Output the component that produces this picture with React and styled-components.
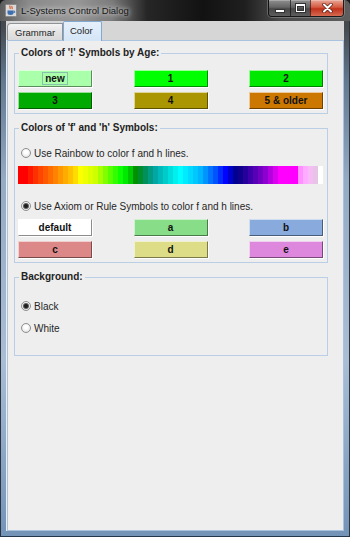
import React from "react";
import styled, { createGlobalStyle } from "styled-components";

const GlobalStyle = createGlobalStyle`
  html, body {
    margin: 0;
    padding: 0;
    background: #1b1b1b;
  }
  body {
    font-family: "Liberation Sans", Arial, sans-serif;
  }
`;

const Window = styled.div`
  width: 350px;
  height: 537px;
  box-sizing: border-box;
  display: flex;
  flex-direction: column;
  border-radius: 6px 6px 0 0;
  overflow: hidden;
  background: linear-gradient(
    180deg,
    #3e3e3e 0,
    #474c52 30px,
    #61788f 80px,
    #94abc4 180px,
    #a9bed5 360px,
    #7393b7 100%
  );
  box-shadow: inset 1px 0 #2b3440, inset -1px 0 #2b3440, inset 0 -1px #24364c;
`;

const TitleBar = styled.div`
  height: 21px;
  flex: none;
  display: flex;
  align-items: flex-start;
  background: linear-gradient(
    90deg,
    #5c5c5c 0,
    #8a8a8a 8%,
    #979797 22%,
    #7a7a7a 32%,
    #262626 42%,
    #121212 58%,
    #1f1f1f 70%,
    #4c4c4c 80%,
    #5e5e5e 100%
  );
`;

const AppIcon = styled.svg`
  margin: 4px 0 0 5px;
  flex: none;
`;

const TitleText = styled.span`
  margin: 5px 0 0 4px;
  font-size: 9.5px;
  line-height: 11px;
  color: #151515;
  text-shadow: 0 0 4px #e4e4e4, 0 0 8px rgba(255, 255, 255, 0.7);
`;

const Controls = styled.div`
  display: flex;
  margin-left: auto;
  margin-right: 6px;
  height: 16px;
  border: 1px solid rgba(0, 0, 0, 0.7);
  border-top: none;
  border-radius: 0 0 4px 4px;
  overflow: hidden;
  box-shadow: 0 0 0 1px rgba(255, 255, 255, 0.22);
`;

const CtrlButton = styled.div`
  width: ${(p) => p.$w}px;
  display: flex;
  align-items: center;
  justify-content: center;
  border-left: ${(p) => (p.$first ? "none" : "1px solid rgba(0,0,0,0.55)")};
  background: ${(p) =>
    p.$close
      ? "linear-gradient(180deg, #e9a696 0, #d55a41 45%, #c1321c 55%, #d66a52 100%)"
      : "linear-gradient(180deg, #8f8f8f 0, #646464 45%, #474747 55%, #5d5d5d 100%)"};
  box-shadow: inset 0 1px rgba(255, 255, 255, 0.25);
`;

const MinGlyph = styled.span`
  width: 8px;
  height: 2px;
  margin-top: 6px;
  background: #fff;
  border: 1px solid #333;
`;

const MaxGlyph = styled.span`
  width: 7px;
  height: 5px;
  border: 1px solid #fff;
  border-top-width: 2px;
  box-shadow: 0 0 0 1px #333, inset 0 0 0 1px #333;
`;

const Frame = styled.div`
  flex: 1;
  display: flex;
  padding: 0 6px 6px;
  min-height: 0;
`;

const Client = styled.div`
  flex: 1;
  display: flex;
  flex-direction: column;
  background: #eeeeee;
`;

const TabStrip = styled.div`
  height: 19px;
  flex: none;
  display: flex;
  align-items: flex-end;
  padding-left: 1px;
  background: #d6d6d6;
`;

const Tab = styled.div`
  box-sizing: border-box;
  width: ${(p) => p.$w}px;
  height: ${(p) => (p.$active ? 20 : 17)}px;
  margin-bottom: ${(p) => (p.$active ? -1 : 0)}px;
  position: relative;
  z-index: ${(p) => (p.$active ? 1 : 0)};
  display: flex;
  align-items: center;
  padding-left: ${(p) => (p.$active ? 6 : 7)}px;
  padding-bottom: ${(p) => (p.$active ? 2 : 0)}px;
  border: 1px solid ${(p) => (p.$active ? "#85a8cf" : "#909396")};
  border-bottom: none;
  border-radius: ${(p) => (p.$active ? "2px 2px 0 0" : "4px 0 0 0")};
  background: ${(p) =>
    p.$active
      ? "linear-gradient(180deg, #e6f0fb 0, #d4e5f6 100%)"
      : "linear-gradient(180deg, #f4f4f4 0, #e3e3e3 50%, #d9d9d9 100%)"};
  font-size: 9.5px;
  color: #1e1e1e;
`;

const Panel = styled.div`
  flex: 1;
  margin-left: 1px;
  display: flex;
  flex-direction: column;
  gap: 14px;
  padding: 12px 15px 0 6px;
  border: 1px solid #a9c3df;
  background: #eeeeee;
`;

const Group = styled.div`
  border: 1px solid #bacfe5;
  padding: 0 4px ${(p) => p.$pb}px 3px;
  display: flex;
  flex-direction: column;
`;

const Legend = styled.div`
  width: fit-content;
  margin: -7px 0 0 1px;
  padding: 0 2px;
  background: #eeeeee;
  font-size: 10px;
  font-weight: bold;
  line-height: 12px;
  color: #222;
`;

const ButtonGrid = styled.div`
  display: grid;
  grid-template-columns: repeat(3, 74px);
  justify-content: space-between;
  row-gap: 5px;
  margin-top: ${(p) => p.$mt}px;
`;

const ColorButton = styled.div`
  height: 17px;
  box-sizing: border-box;
  display: flex;
  align-items: center;
  justify-content: center;
  background: ${(p) => p.$bg};
  border: 1px solid;
  border-color: rgba(255, 255, 255, 0.6) rgba(0, 0, 0, 0.45) rgba(0, 0, 0, 0.45)
    rgba(255, 255, 255, 0.6);
  box-shadow: 1px 1px 0 rgba(255, 255, 255, 0.9);
  font-size: 10px;
  font-weight: bold;
  color: #111;
`;

const FocusRing = styled.span`
  height: 13px;
  box-sizing: border-box;
  display: flex;
  align-items: center;
  padding: 0 2px;
  border: 1px solid rgba(110, 140, 170, 0.55);
`;

const RadioRow = styled.label`
  display: flex;
  align-items: center;
  height: 14px;
  margin: ${(p) => p.$mt || 0}px 0 0 3px;
  font-size: 10px;
  color: #262626;
`;

const RadioDot = styled.span`
  width: 10px;
  height: 10px;
  box-sizing: border-box;
  margin-right: 3px;
  border-radius: 50%;
  border: 1px solid #8e8e8e;
  background: radial-gradient(circle at 50% 40%, #ffffff 25%, #d8d8d8 100%);
  display: flex;
  align-items: center;
  justify-content: center;
  &::after {
    content: "";
    display: ${(p) => (p.$checked ? "block" : "none")};
    width: 4px;
    height: 4px;
    border-radius: 50%;
    background: #1c1c1c;
    box-shadow: 0 0 0 1px #5a5a5a;
  }
`;

const RainbowBar = styled.div`
  height: 18px;
  margin-top: 6px;
  display: flex;
`;

const Band = styled.div`
  flex: 1;
  background: ${(p) => p.$c};
`;

const rainbowStops = [
  [0, "#ff0000"], [9, "#ff0000"], [14, "#ff2200"], [40, "#ff8c00"],
  [56, "#ffd000"], [62, "#ffff00"], [78, "#ccff00"], [95, "#44ff00"],
  [104, "#00ff00"], [112, "#00cc00"], [118, "#008a00"], [128, "#009060"],
  [138, "#00a8a8"], [150, "#00d4d4"], [162, "#00ffff"], [182, "#00b8ff"],
  [198, "#0050ff"], [208, "#0000ff"], [219, "#000080"], [232, "#3a00a8"],
  [248, "#9000d0"], [262, "#ff00ff"], [280, "#ff00ff"], [281, "#ff88ff"],
  [290, "#ffb8ff"], [300, "#dcc8dc"], [301, "#ffffff"], [305, "#ffffff"],
];

function hexToRgb(h) {
  const n = parseInt(h.slice(1), 16);
  return [(n >> 16) & 255, (n >> 8) & 255, n & 255];
}

function colorAt(x) {
  for (let i = 0; i < rainbowStops.length - 1; i++) {
    const [x0, c0] = rainbowStops[i];
    const [x1, c1] = rainbowStops[i + 1];
    if (x >= x0 && x <= x1) {
      const t = x1 === x0 ? 0 : (x - x0) / (x1 - x0);
      const a = hexToRgb(c0);
      const b = hexToRgb(c1);
      const m = a.map((v, k) => Math.round(v + (b[k] - v) * t));
      return `rgb(${m[0]}, ${m[1]}, ${m[2]})`;
    }
  }
  return "#ffffff";
}

const bands = Array.from({ length: 61 }, (_, i) => colorAt(i * 5 + 2.5));

const ageColors = [
  { label: "new", bg: "#aaffaa", focus: true },
  { label: "1", bg: "#00ff00" },
  { label: "2", bg: "#00e800" },
  { label: "3", bg: "#00aa00" },
  { label: "4", bg: "#aa9600" },
  { label: "5 & older", bg: "#cc7700" },
];

const symbolColors = [
  { label: "default", bg: "#ffffff" },
  { label: "a", bg: "#88dd88" },
  { label: "b", bg: "#88aadd" },
  { label: "c", bg: "#dd8888" },
  { label: "d", bg: "#dddd88" },
  { label: "e", bg: "#dd88dd" },
];

function Buttons({ items, mt }) {
  return (
    <ButtonGrid $mt={mt}>
      {items.map((b) => (
        <ColorButton key={b.label} $bg={b.bg}>
          {b.focus ? <FocusRing>{b.label}</FocusRing> : b.label}
        </ColorButton>
      ))}
    </ButtonGrid>
  );
}

function Radio({ checked, children, mt }) {
  return (
    <RadioRow $mt={mt}>
      <RadioDot $checked={checked} />
      {children}
    </RadioRow>
  );
}

export default function App() {
  return (
    <>
      <GlobalStyle />
      <Window>
        <TitleBar>
          <AppIcon width="12" height="13" viewBox="0 0 12 13">
            <rect x="0.5" y="0.5" width="11" height="12" rx="1" fill="#d9d9d9" stroke="#8a8a8a" />
            <path d="M5 1.5c-1 1.2 1 2 0 3.5M7 2c-.8 1 .8 1.6 0 3" stroke="#e0521b" strokeWidth="1.1" fill="none" />
            <path d="M2.5 6.5h6v2.5c0 1.3-1 2-3 2s-3-.7-3-2z" fill="#3d6fb0" />
            <path d="M8.5 7.2h1.2v1.3h-1.2" stroke="#3d6fb0" fill="none" />
          </AppIcon>
          <TitleText>L-Systems Control Dialog</TitleText>
          <Controls>
            <CtrlButton $w={21} $first>
              <MinGlyph />
            </CtrlButton>
            <CtrlButton $w={19}>
              <MaxGlyph />
            </CtrlButton>
            <CtrlButton $w={32} $close>
              <svg width="11" height="10" viewBox="0 0 11 10">
                <path d="M2 1.5l7 7M9 1.5l-7 7" stroke="#5a1a10" strokeWidth="3.4" strokeLinecap="round" />
                <path d="M2 1.5l7 7M9 1.5l-7 7" stroke="#ffffff" strokeWidth="2" strokeLinecap="round" />
              </svg>
            </CtrlButton>
          </Controls>
        </TitleBar>
        <Frame>
          <Client>
            <TabStrip>
              <Tab $w={56}>Grammar</Tab>
              <Tab $w={39} $active>
                Color
              </Tab>
            </TabStrip>
            <Panel>
              <Group $pb={4}>
                <Legend>Colors of '!' Symbols by Age:</Legend>
                <Buttons items={ageColors} mt={11} />
              </Group>
              <Group $pb={4}>
                <Legend>Colors of 'f' and 'h' Symbols:</Legend>
                <Radio mt={12}>Use Rainbow to color f and h lines.</Radio>
                <RainbowBar>
                  {bands.map((c, i) => (
                    <Band key={i} $c={c} />
                  ))}
                </RainbowBar>
                <Radio checked mt={15}>
                  Use Axiom or Rule Symbols to color f and h lines.
                </Radio>
                <Buttons items={symbolColors} mt={6} />
              </Group>
              <Group $pb={20}>
                <Legend>Background:</Legend>
                <Radio checked mt={16}>
                  Black
                </Radio>
                <Radio mt={8}>White</Radio>
              </Group>
            </Panel>
          </Client>
        </Frame>
      </Window>
    </>
  );
}
